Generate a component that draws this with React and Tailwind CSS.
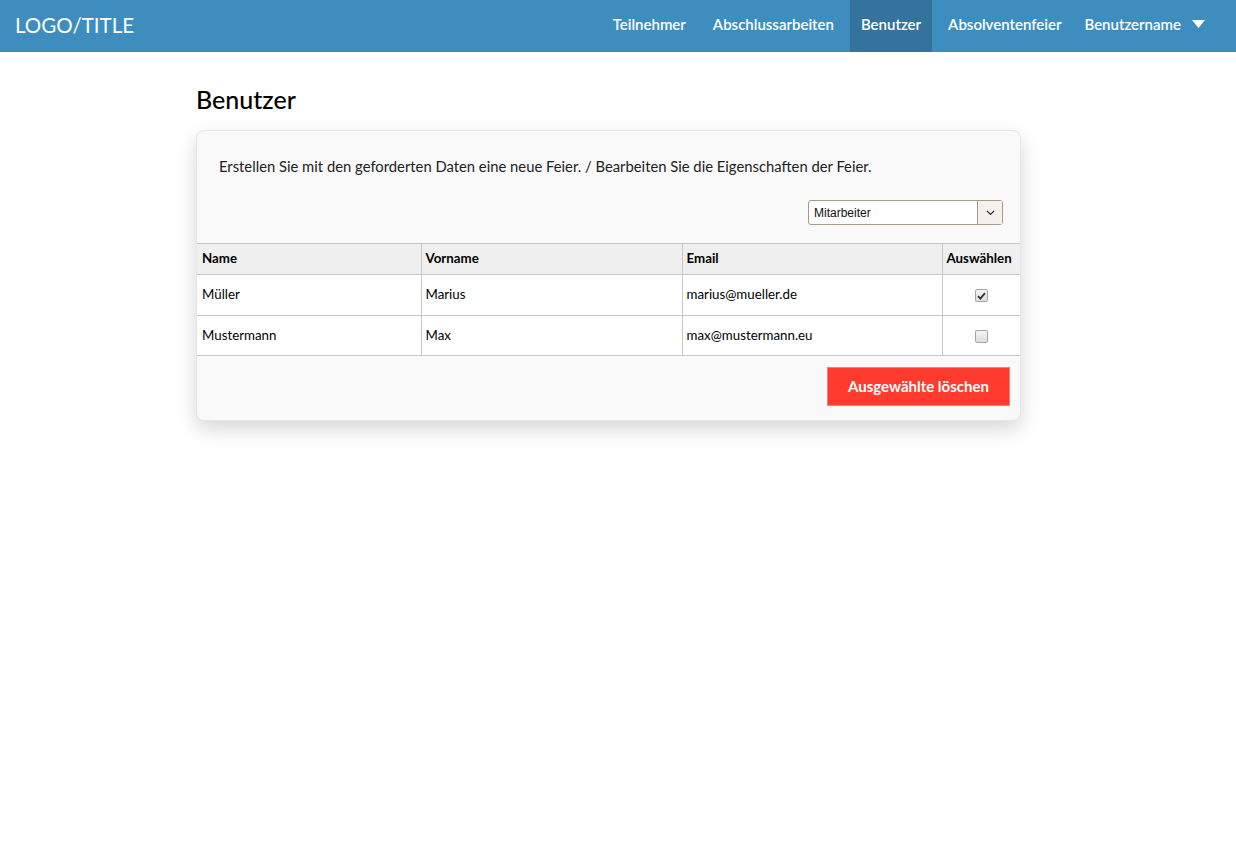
import { useState } from 'react';

const navItems = ['Teilnehmer', 'Abschlussarbeiten', 'Benutzer', 'Absolventenfeier'];

const users = [
  { name: 'Müller', vorname: 'Marius', email: 'marius@mueller.de', selected: true },
  { name: 'Mustermann', vorname: 'Max', email: 'max@mustermann.eu', selected: false },
];

function Checkbox({ checked, onChange }) {
  return (
    <button
      type="button"
      onClick={onChange}
      className="inline-flex h-[13px] w-[13px] items-center justify-center rounded-[2px] border border-[#a5a5a5] bg-gradient-to-b from-[#f4f4f4] to-[#dedede] align-middle"
    >
      {checked && (
        <svg width="9" height="8" viewBox="0 0 9 8">
          <path d="M1 4.2l2.4 2.4L8 1.2" stroke="#333" strokeWidth="1.8" fill="none" />
        </svg>
      )}
    </button>
  );
}

export default function App() {
  const [rows, setRows] = useState(users);

  return (
    <div className="min-h-screen bg-white font-['Lato','Noto_Sans',sans-serif] text-black">
      <header className="flex h-[52px] items-center justify-between bg-[#3d8ebf] pl-[15px] pr-[31px] text-white">
        <div className="pb-[1px] text-[20.5px] leading-none">LOGO/TITLE</div>
        <nav className="flex h-full items-stretch gap-[5px]">
          {navItems.map((item) => (
            <a
              key={item}
              className={`flex items-center px-[11px] pb-[4px] text-[15px] font-semibold ${
                item === 'Benutzer' ? 'bg-[#33739c]' : ''
              }`}
            >
              {item}
            </a>
          ))}
          <a className="flex items-center gap-[11px] pl-[7px] pb-[4px] text-[15px] font-semibold">
            Benutzername
            <svg width="13" height="8" viewBox="0 0 13 8">
              <path d="M0 0h13L6.5 8z" fill="white" />
            </svg>
          </a>
        </nav>
      </header>

      <main className="ml-[196px] w-[825px] pt-[32px]">
        <h1 className="text-[25px] font-medium leading-[30px]">Benutzer</h1>
        <div className="mt-[16px] overflow-hidden rounded-[8px] border border-[#e6e6e6] bg-[#f9f9f9] shadow-[0_8px_20px_rgba(0,0,0,0.16)]">
          <p className="px-[22px] pt-[26px] text-[14.8px] leading-[18px] text-[#222]">
            Erstellen Sie mit den geforderten Daten eine neue Feier. / Bearbeiten Sie die Eigenschaften der Feier.
          </p>
          <div className="flex justify-end px-[17px] pt-[25px] pb-[18px]">
            <div className="flex h-[25px] w-[195px] rounded-[3px] border border-[#a89b86] bg-white font-['Liberation_Sans',Arial,sans-serif] text-[12px]">
              <span className="flex flex-1 items-center pl-[5px] text-[#111]">Mitarbeiter</span>
              <span className="flex w-[25px] items-center justify-center border-l border-[#a89b86] bg-[#f3f1ec]">
                <svg width="9" height="6" viewBox="0 0 9 6">
                  <path d="M1 1l3.5 3.5L8 1" stroke="#333" strokeWidth="1.2" fill="none" />
                </svg>
              </span>
            </div>
          </div>
          <table className="w-full border-collapse text-[13.3px]">
            <thead>
              <tr className="h-[31px] bg-[#efefef] text-left">
                <th className="w-[224px] border border-l-0 border-[#c8c8c8] px-[5px] font-bold">Name</th>
                <th className="w-[261px] border border-[#c8c8c8] px-[4px] font-bold">Vorname</th>
                <th className="w-[260px] border border-[#c8c8c8] px-[4px] font-bold">Email</th>
                <th className="border border-r-0 border-[#c8c8c8] px-[4px] font-bold">Auswählen</th>
              </tr>
            </thead>
            <tbody>
              {rows.map((u, i) => (
                <tr key={u.email} className={`${i === 0 ? 'h-[41px]' : 'h-[40px]'} bg-white`}>
                  <td className="border border-l-0 border-[#c8c8c8] px-[5px]">{u.name}</td>
                  <td className="border border-[#c8c8c8] px-[4px]">{u.vorname}</td>
                  <td className="border border-[#c8c8c8] px-[4px]">{u.email}</td>
                  <td className="border border-r-0 border-[#c8c8c8] text-center leading-none">
                    <Checkbox
                      checked={u.selected}
                      onChange={() =>
                        setRows(rows.map((r, j) => (j === i ? { ...r, selected: !r.selected } : r)))
                      }
                    />
                  </td>
                </tr>
              ))}
            </tbody>
          </table>
          <div className="flex justify-end px-[10px] pt-[11px] pb-[14px]">
            <button
              type="button"
              className="h-[39px] w-[183px] border border-[#ff7a72] bg-[#ff3b30] text-[15px] font-bold text-white"
            >
              Ausgewählte löschen
            </button>
          </div>
        </div>
      </main>
    </div>
  );
}
